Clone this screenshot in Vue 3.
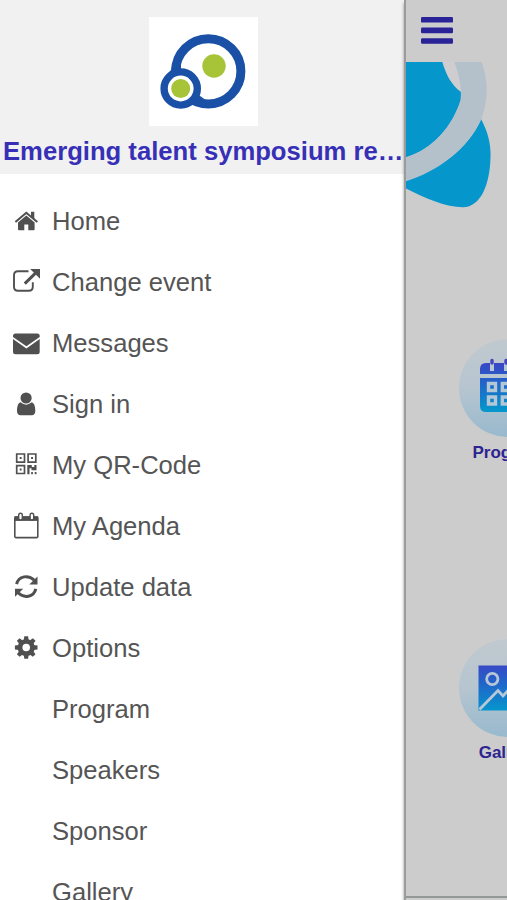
<script setup>
const items = [
  { label: 'Home', icon: 'home' },
  { label: 'Change event', icon: 'external' },
  { label: 'Messages', icon: 'mail' },
  { label: 'Sign in', icon: 'user' },
  { label: 'My QR-Code', icon: 'qr' },
  { label: 'My Agenda', icon: 'calendar' },
  { label: 'Update data', icon: 'refresh' },
  { label: 'Options', icon: 'cog' },
  { label: 'Program' },
  { label: 'Speakers' },
  { label: 'Sponsor' },
  { label: 'Gallery' },
]
const teeth = [0, 45, 90, 135, 180, 225, 270, 315]
</script>

<template>
  <div class="screen">
    <aside class="drawer">
      <header class="head">
        <svg class="logo" viewBox="0 0 109 109">
          <rect width="109" height="109" fill="#fff" />
          <circle cx="59.3" cy="54.3" r="32.6" fill="#fff" stroke="#1a50a6" stroke-width="9" />
          <path d="M20 56Q23 53 23 46L32 44V58ZM40 89Q46 86.5 54 91L58 84L47 76Z" fill="#1a50a6" />
          <circle cx="31.7" cy="71.5" r="16.6" fill="#fff" stroke="#1a50a6" stroke-width="7.4" />
          <circle cx="31.7" cy="71.5" r="9.5" fill="#a7c338" />
          <circle cx="65" cy="49" r="11.7" fill="#a7c338" />
        </svg>
        <h1>Emerging talent symposium re…</h1>
      </header>
      <nav>
        <a v-for="item in items" :key="item.label" class="row">
          <svg class="icon" viewBox="0 0 32 31" fill="#505050">
            <template v-if="item.icon === 'home'">
              <path d="M16.3 9.6L24.6 16.4V23.3Q24.6 24.3 23.6 24.3H18.3V18.4H14.3V24.3H9Q8 24.3 8 23.3V16.4Z" />
              <path d="M5.4 16L16.3 6.8L27.3 16" fill="none" stroke="#505050" stroke-width="2.1" />
              <path d="M21 5.8H24.3V13.5L21 10.7Z" />
            </template>
            <template v-else-if="item.icon === 'external'">
              <path d="M18.5 4.2H8Q4 4.2 4 8.2V19.8Q4 23.8 8 23.8H18.8Q22.8 23.8 22.8 19.8V15.2" fill="none" stroke="#505050" stroke-width="1.9" />
              <path d="M14.8 16.6L26 5.6" fill="none" stroke="#505050" stroke-width="3" />
              <path d="M20.2 2H30V11.8Z" />
            </template>
            <template v-else-if="item.icon === 'mail'">
              <path d="M3 9V8Q3 5.5 5.5 5.5H27.2Q29.7 5.5 29.7 8V9L16.4 18.3Z" />
              <path d="M3 11.1L16.4 20.5L29.7 11.1V23.7Q29.7 26.2 27.2 26.2H5.5Q3 26.2 3 23.7Z" />
            </template>
            <template v-else-if="item.icon === 'user'">
              <circle cx="16.1" cy="9" r="5.6" />
              <path d="M10.5 13.3Q16.1 18.2 21.7 13.3C24.5 14.2 25.3 18 25.3 21.8Q25.3 26.2 21.8 26.2H10.6Q7 26.2 7 21.8C7 18 7.8 14.2 10.5 13.3Z" />
            </template>
            <template v-else-if="item.icon === 'qr'">
              <path d="M6.7 4H14.5V12.1H6.7ZM18.1 4H25.8V12.1H18.1ZM6.7 15.6H14.5V23.5H6.7Z" fill="none" stroke="#505050" stroke-width="1.7" />
              <path d="M9.7 7.1H11.6V9H9.7ZM21.1 7.1H23V9H21.1ZM9.7 18.6H11.6V20.5H9.7ZM17.3 14.9H21.8V17H24.3V14.9H26.5V20.3H21.5V18.2H19.5V24.2H17.3ZM21.2 22H22.9V24.2H21.2ZM24.7 22H26.5V24.2H24.7Z" />
            </template>
            <template v-else-if="item.icon === 'calendar'">
              <rect x="4.8" y="6.1" width="23" height="20.5" rx="1" fill="none" stroke="#505050" stroke-width="1.6" />
              <rect x="4.5" y="5.3" width="23.6" height="4.6" />
              <rect x="8.7" y="2.2" width="3.6" height="6.8" rx="1.8" fill="#fff" stroke="#505050" stroke-width="1.4" />
              <rect x="20.1" y="2.2" width="3.6" height="6.8" rx="1.8" fill="#fff" stroke="#505050" stroke-width="1.4" />
            </template>
            <template v-else-if="item.icon === 'refresh'">
              <path d="M6.6 12.2C8.6 3.6 18.5 2.6 24.3 8.3M25.8 16.9C23.8 25.5 13.9 26.5 8.1 20.8" fill="none" stroke="#505050" stroke-width="3" />
              <path d="M27.5 4.4V12.4H19.3ZM5 24.7V16.7H13.2Z" />
            </template>
            <template v-else-if="item.icon === 'cog'">
              <circle cx="16.2" cy="14.5" r="6.2" fill="none" stroke="#505050" stroke-width="4.8" />
              <path v-for="a in teeth" :key="a" d="M13.7 7.5L14.3 3.2H18.1L18.7 7.5Z" :transform="`rotate(${a} 16.2 14.5)`" />
            </template>
          </svg>
          <span>{{ item.label }}</span>
        </a>
      </nav>
    </aside>

    <main class="page">
      <svg class="burger" viewBox="0 0 32 27" fill="#292397">
        <rect width="32" height="5.6" rx="1.2" />
        <rect y="10.6" width="32" height="5.6" rx="1.2" />
        <rect y="21.2" width="32" height="5.6" rx="1.2" />
      </svg>
      <svg class="banner" viewBox="1 0 102 146">
        <path d="M37 0H50L57 31Q43 20 37 0Z" fill="#cfcdcf" />
        <path d="M0 0H37.3C41 12 46 23 56 30V38C49 63 27 88 0 95.5Z" fill="#0597cc" />
        <path d="M76 57C83 70 86 82 85.5 95C85 122 76 145 58 145.3C42 145.5 19 136 0 126V118C32 109 63 87 76 57Z" fill="#0597cc" />
        <path d="M49.3 0H76.5C83 17 84 37 76 58C63 87 32 110 0 119.5V95.5C27 89 48 63 55.5 38C57 26 54 12 49.3 0Z" fill="#b5c1ca" />
      </svg>
      <section class="tile program">
        <svg class="disc" viewBox="0 0 98 98">
          <defs>
            <linearGradient id="disc" x1="0" y1="0" x2="0" y2="1">
              <stop offset="0" stop-color="#c1c9cf" />
              <stop offset=".5" stop-color="#b6c5d0" />
              <stop offset="1" stop-color="#98b9cd" />
            </linearGradient>
            <linearGradient id="ink" gradientUnits="userSpaceOnUse" x1="0" y1="24" x2="0" y2="72">
              <stop offset="0" stop-color="#3a45c5" />
              <stop offset=".45" stop-color="#1f67c9" />
              <stop offset="1" stop-color="#0597cc" />
            </linearGradient>
          </defs>
          <circle cx="49" cy="49" r="49" fill="url(#disc)" />
          <path d="M21 35V30Q21 24 27 24H71Q77 24 77 30V35ZM21 39H77V67Q77 73 71 73H27Q21 73 21 67Z" fill="url(#ink)" />
          <path d="M33 21V32M47 21V32M65 21V32" stroke="#b9c6d3" stroke-width="4" />
          <path d="M33 21.5V24M47 21.5V24" stroke="#4545bd" stroke-width="3.4" stroke-linecap="round" />
          <path d="M29.5 44.5H36.5V51.5H29.5ZM43.3 44.5H50.3V51.5H43.3ZM57 44.5H64V51.5H57ZM29.5 58H36.5V65H29.5ZM43.3 58H50.3V65H43.3ZM57 58H64V65H57Z" fill="none" stroke="#b3c7d5" stroke-width="3.4" />
        </svg>
        <span>Program</span>
      </section>
      <section class="tile gallery">
        <svg class="disc" viewBox="0 0 98 98">
          <circle cx="49" cy="49" r="49" fill="url(#disc)" />
          <rect x="19.5" y="26.5" width="59" height="45" fill="url(#ink)" />
          <circle cx="33.3" cy="40" r="5.6" fill="none" stroke="#b8c7d8" stroke-width="2.8" />
          <path d="M20.5 70.5L39 51.5L44 57L53 47L77 70" fill="none" stroke="#b8c7d5" stroke-width="2.8" />
        </svg>
        <span>Gallery</span>
      </section>
      <div class="foot"></div>
    </main>
  </div>
</template>

<style>
body {
  margin: 0;
  overflow: hidden;
}
</style>

<style scoped>
.screen {
  display: flex;
  width: 507px;
  height: 900px;
  overflow: hidden;
  background: #fff;
  font-family: "Liberation Sans", Arial, sans-serif;
}
.drawer {
  flex: 0 0 404px;
  height: 900px;
  overflow: hidden;
}
.head {
  display: flex;
  flex-direction: column;
  align-items: center;
  box-sizing: border-box;
  height: 174px;
  padding: 17px 0 0 2px;
  background: #f1f1f1;
}
.logo {
  width: 109px;
  height: 109px;
}
h1 {
  align-self: stretch;
  margin: 10px 0 0;
  padding-left: 1px;
  font-size: 25.65px;
  line-height: 30px;
  font-weight: 700;
  color: #3730b7;
  white-space: nowrap;
}
nav {
  padding-top: 17px;
}
.row {
  display: flex;
  align-items: center;
  height: 61px;
  padding-left: 10px;
  color: #555;
  font-size: 25.6px;
  line-height: 30px;
}
.row span {
  padding-bottom: 2px;
}
.icon {
  flex: none;
  width: 32px;
  height: 31px;
  margin-right: 10px;
}
.page {
  display: flex;
  flex-direction: column;
  flex: 0 0 103px;
  box-sizing: border-box;
  height: 900px;
  border-left: 2px solid #9b9b9b;
  background: #ccc;
  box-shadow: 0 3px 3px rgba(0, 0, 0, 0.4);
}
.burger {
  width: 32px;
  height: 27px;
  margin: 17px 0 18px 15px;
}
.banner {
  width: 102px;
  height: 146px;
}
.tile {
  display: flex;
  flex-direction: column;
  align-items: center;
  width: 98px;
  margin-left: 52.5px;
  color: #2d2492;
  font-size: 17px;
  line-height: 20px;
  font-weight: 700;
}
.program {
  margin-top: 131px;
}
.gallery {
  margin-top: 176px;
}
.disc {
  width: 98px;
  height: 98px;
}
.tile span {
  margin-top: 6px;
}
.foot {
  height: 2px;
  margin-top: auto;
  margin-bottom: 2px;
  background: #939998;
}
</style>
